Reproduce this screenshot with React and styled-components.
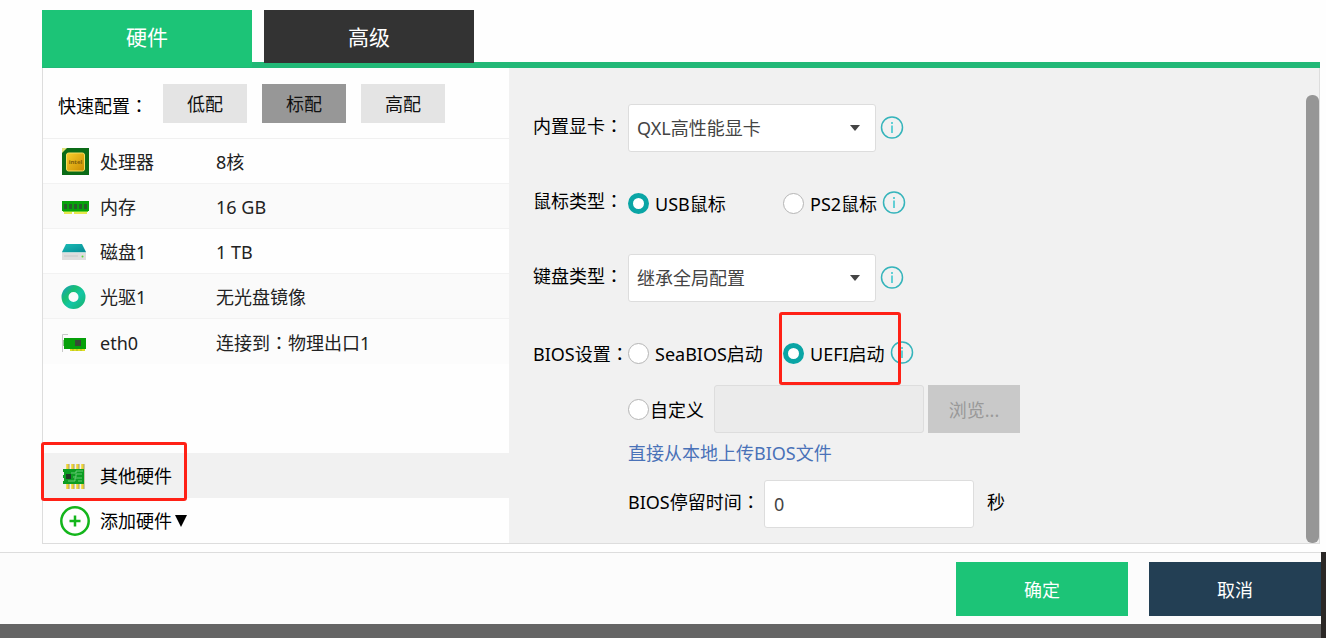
import { useState } from 'react'
import styled, { createGlobalStyle, css } from 'styled-components'

const GlobalStyle = createGlobalStyle`
    * {
        box-sizing: border-box;
    }
    body {
        margin: 0;
        background: #fefefe;
        color: #000;
    }
    body, button, input, select {
        font-family: 'Noto Sans', 'Noto Sans CJK SC', sans-serif;
        font-size: 18px;
        line-height: 24px;
    }
`

const Dialog = styled.div`
    padding-top: 10px;
`

const Main = styled.main`
    margin: 0 6px 8px 42px;
`

const Tabs = styled.div`
    display: flex;
    gap: 12px;
    border-bottom: 6px solid #22b877;
`

const Tab = styled.button`
    width: 210px;
    height: 52px;
    padding: 2px 0 0;
    border: 0;
    background: ${props => props.$active ? '#1cc477' : '#333'};
    box-shadow: ${props => props.$active ? '0 5px 0 #1cc477' : '0 1px 0 #333'};
    color: #fff;
    font-size: 21px;
    cursor: pointer;
`

const Panel = styled.div`
    display: flex;
    border: 1px solid #ddd;
    border-top: 0;
`

const Sidebar = styled.section`
    display: flex;
    flex: none;
    flex-direction: column;
    width: 466px;
`

const QuickConfig = styled.div`
    display: flex;
    align-items: center;
    height: 71px;
    padding-left: 15px;
    border-bottom: 1px solid #f0f0f0;
`

const QuickLabel = styled.span`
    width: 105px;
    padding-top: 4px;
`

const QuickButton = styled.button`
    width: 84px;
    height: 39px;
    margin-right: 15px;
    padding: 2px 0 0;
    border: 0;
    background: ${props => props.$active ? '#979797' : '#e4e4e4'};
    color: #111;
    cursor: pointer;
`

// full-width colon that sits in the middle of its cell
const ColonMark = styled.span`
    font-family: 'Noto Sans CJK TC', sans-serif;
`

const HardwareList = styled.ul`
    margin: 0 0 auto;
    padding: 0;
    list-style: none;
`

const rowStyle = css`
    display: flex;
    align-items: center;
    gap: 10px;
    width: 100%;
    height: 45px;
    padding: 0 0 0 17px;
    text-align: left;
`

const HardwareRow = styled.li`
    ${rowStyle}
    border-bottom: 1px solid #f2f2f2;
    color: #222;
    &:nth-child(even) {
        background: #fafafa;
    }
    &:last-child {
        border-bottom: 0;
        background: #fcfcfc;
    }
`

const HardwareName = styled.span`
    width: 106px;
    padding-top: 2px;
`

const HardwareValue = styled.span`
    padding-top: 2px;
`

const HardwareButton = styled.button`
    ${rowStyle}
    position: relative;
    border: 0;
    background: ${props => props.$active ? '#f1f1f1' : 'transparent'};
    color: #000;
    cursor: pointer;
`

const ButtonLabel = styled.span`
    display: flex;
    align-items: center;
    gap: 2px;
`

const Icon = styled.svg`
    flex: none;
    width: 30px;
    height: 30px;
`

const Settings = styled.section`
    display: flex;
    flex: 1;
    min-width: 0;
    background: #f1f1f1;
`

const Form = styled.form`
    display: flex;
    flex: 1;
    flex-direction: column;
    gap: 27px;
    padding: 36px 0 15px 24px;
`

const Scrollbar = styled.div`
    width: 13px;
    margin-top: 27px;
    border-radius: 6px;
    background: #969696;
`

const Field = styled.div`
    display: flex;
    align-items: center;
    height: 48px;
`

const FieldLabel = styled.label`
    flex: none;
    width: ${props => props.$wide ? '136px' : '95px'};
    padding-bottom: ${props => props.$flush ? '0' : '5px'};
    white-space: nowrap;
`

const BiosGroup = styled.div`
    display: flex;
    flex-direction: column;
    gap: 8px;
`

const BiosExtra = styled.div`
    display: flex;
    flex-direction: column;
    gap: 4px;
    padding-left: 95px;
`

const SelectBox = styled.div`
    display: grid;
    align-items: center;
    width: 248px;
    margin-right: 4px;
    > * {
        grid-area: 1 / 1;
    }
    > svg {
        justify-self: end;
        width: 12px;
        height: 7px;
        margin-right: 15px;
        pointer-events: none;
    }
`

const boxStyle = css`
    height: 48px;
    border: 1px solid #ddd;
    border-radius: 3px;
    background: #fff;
    color: #444;
    outline: none;
`

const Select = styled.select`
    ${boxStyle}
    width: 100%;
    padding: 0 30px 0 8px;
    appearance: none;
`

const TextInput = styled.input`
    ${boxStyle}
    width: 210px;
    padding: 0 9px;
    &:disabled {
        background: #ebebeb;
    }
`

const RadioLabel = styled.label`
    position: relative;
    display: flex;
    align-items: center;
    gap: ${props => props.$tight ? '1px' : '6px'};
    min-width: ${props => props.$first ? '155px' : '0'};
    margin-right: ${props => props.$first ? '0' : '5px'};
    padding-top: 1px;
    white-space: nowrap;
`

const Radio = styled.input`
    appearance: none;
    flex: none;
    width: 21px;
    height: 21px;
    margin: 0;
    border: 1px solid #b5b5b5;
    border-radius: 50%;
    background: #fff;
    &:checked {
        border: 5px solid #0aa5a5;
    }
`

const CustomField = styled(Field)`
    ${RadioLabel} {
        margin-right: 10px;
    }
`

const BrowseButton = styled.button`
    width: 92px;
    height: 48px;
    margin-left: 4px;
    padding: 2px 0 0;
    border: 0;
    background: #c9c9c9;
    color: #999;
`

const UploadLink = styled.a`
    align-self: flex-start;
    padding-bottom: 7px;
    color: #4a72b8;
    line-height: 32px;
    text-decoration: none;
`

const Unit = styled.span`
    padding: 0 0 5px 13px;
`

const Highlight = styled.span`
    position: absolute;
    z-index: 1;
    border: 3px solid #ff2116;
    border-radius: 3px;
    pointer-events: none;
`

const RowHighlight = styled(Highlight)`
    top: -11px;
    left: -2px;
    width: 146px;
    height: 59px;
`

const OptionHighlight = styled(Highlight)`
    inset: -29px -16px -19px -4px;
`

const Bottom = styled.div`
    display: flex;
`

const Footer = styled.footer`
    display: flex;
    flex: 1;
    justify-content: flex-end;
    gap: 21px;
    padding: 9px 0 8px;
    border-top: 1px solid #ddd;
    background: #fcfcfc;
`

const FooterButton = styled.button`
    width: 172px;
    height: 54px;
    padding: 2px 0 0;
    border: 0;
    background: ${props => props.$primary ? '#1cc477' : '#233f54'};
    color: #fff;
    cursor: pointer;
`

const Edge = styled.div`
    width: 5px;
    background: #2b2826;
`

const Backdrop = styled.div`
    flex: 1;
    height: 14px;
    background: #656565;
`

function CpuIcon() {
    return (
        <Icon viewBox='0 0 30 30'>
            <defs>
                <linearGradient id='gold' x1='0' y1='0' x2='1' y2='1'>
                    <stop offset='0' stopColor='#f8cf2c' />
                    <stop offset='1' stopColor='#c98a00' />
                </linearGradient>
            </defs>
            <rect x='2' y='2' width='27' height='27' fill='#0b6b17' />
            <path d='M2 2h5l-5 5z' fill='#dfe27a' />
            <rect x='6.500' y='7' width='18' height='18' rx='2' fill='url(#gold)' stroke='#f6de62' />
            <text x='15.500' y='18' textAnchor='middle' fontSize='6' fontWeight='700' fill='#80600b'>intel</text>
        </Icon>
    )
}

function MemoryIcon() {
    return (
        <Icon viewBox='0 0 30 30'>
            <path d='M2 10h27v10H2z' fill='#07a10b' />
            <path d='M4 13h3v5H4zM9 13h3v5H9zM14 13h3v5h-3zM19 13h3v5h-3zM24 13h3v5h-3z' fill='#275c2b' />
            <path d='M3 20h25v1H3z' fill='#68cf2b' />
            <path d='M4 21h8v2H4zM14 21h13v2H14z' fill='#e8e84e' />
        </Icon>
    )
}

function DiskIcon() {
    return (
        <Icon viewBox='0 0 30 30'>
            <defs>
                <linearGradient id='disk' x1='0' y1='0' x2='1' y2='1'>
                    <stop offset='0' stopColor='#1bbcb5' />
                    <stop offset='1' stopColor='#078c96' />
                </linearGradient>
            </defs>
            <path d='M6 8h16l4 8H2z' fill='url(#disk)' />
            <path d='M2 16h24v8H2z' fill='#dedede' />
            <path d='M2 16h24v1H2z' fill='#b6d9d9' />
            <path d='M4 20h14' stroke='#c8c8c8' />
            <circle cx='22.500' cy='20.500' r='1' fill='#57d83b' />
        </Icon>
    )
}

function DiscIcon() {
    return (
        <Icon viewBox='0 0 30 30'>
            <defs>
                <linearGradient id='disc' x1='0' y1='0' x2='1' y2='1'>
                    <stop offset='0' stopColor='#18a9a6' />
                    <stop offset='.3' stopColor='#18bf72' />
                    <stop offset='.6' stopColor='#13c6a6' />
                    <stop offset='1' stopColor='#18b87c' />
                </linearGradient>
            </defs>
            <circle cx='13.500' cy='16' r='8.500' fill='none' stroke='url(#disc)' strokeWidth='7' />
        </Icon>
    )
}

function NetworkIcon() {
    return (
        <Icon viewBox='0 0 30 30'>
            <path d='M8 7.500H2.500V25' fill='none' stroke='#c9c9c9' />
            <path d='M4 11h22v11H4z' fill='#06a00a' />
            <path d='M15 13h6v6h-6z' fill='#374a35' />
            <path d='M3 13h1v6H3z' fill='#8bc98d' />
            <path d='M10 22h15v2H10z' fill='#dede21' />
            <path d='M13 22v2M17 22v2M21 22v2' stroke='#a6b72b' />
        </Icon>
    )
}

function ChipIcon() {
    return (
        <Icon viewBox='0 0 30 30'>
            <path d='M7.500 3v25M12.500 3v25M17.500 3v25M22.500 3v25' stroke='#f0d52f' strokeWidth='2.500' />
            <path d='M9 3v25M14 3v25M19 3v25M24 3v25' stroke='#8f8650' strokeWidth='.8' />
            <path d='M3 8h21v15H3v-3h1v-3H3v-3h1v-3H3z' fill='#0c9d22' />
            <path d='M6 13h5v5H6z' fill='#213b26' />
            <path d='M11 12h5v-2h7M13 16h3v-3h6M8 20h7v-3h7M18 20h4' fill='none' stroke='#7ed58a' strokeWidth='.8' />
        </Icon>
    )
}

function AddIcon() {
    return (
        <Icon viewBox='0 0 30 30'>
            <circle cx='15' cy='15' r='13.700' fill='none' stroke='#13b51b' strokeWidth='2.500' />
            <path d='M15 9.500v11M9.500 15h11' stroke='#13b51b' strokeWidth='2.500' />
        </Icon>
    )
}

function InfoIcon() {
    return (
        <svg width='24' height='24' viewBox='0 0 24 24'>
            <circle cx='12' cy='11.500' r='10.500' fill='none' stroke='#35b4bb' strokeWidth='1.500' />
            <path d='M12 6v2M12 9.500V17' stroke='#35c4cc' strokeWidth='1.500' />
        </svg>
    )
}

function Colon() {
    return <ColonMark>：</ColonMark>
}

function SelectField({ id, label, options }) {
    return (
        <Field>
            <FieldLabel htmlFor={id}>{label}<Colon /></FieldLabel>
            <SelectBox>
                <Select id={id}>
                    {options.map(option => <option key={option}>{option}</option>)}
                </Select>
                <svg viewBox='0 0 12 7'><path d='M1 0h10L6 6z' fill='#444' /></svg>
            </SelectBox>
            <InfoIcon />
        </Field>
    )
}

const hardware = [
    { name: '处理器', value: '8核', icon: <CpuIcon /> },
    { name: '内存', value: '16 GB', icon: <MemoryIcon /> },
    { name: '磁盘1', value: '1 TB', icon: <DiskIcon /> },
    { name: '光驱1', value: '无光盘镜像', icon: <DiscIcon /> },
    { name: 'eth0', value: <>连接到<Colon />物理出口1</>, icon: <NetworkIcon /> },
]

function App() {
    const [tab, setTab] = useState('硬件')
    const [level, setLevel] = useState('标配')
    const [mouse, setMouse] = useState('usb')
    const [bios, setBios] = useState('uefi')
    const [delay, setDelay] = useState('0')

    return (
        <Dialog>
            <GlobalStyle />
            <Main>
                <Tabs>
                    {['硬件', '高级'].map(name => (
                        <Tab key={name} $active={tab === name} onClick={() => setTab(name)}>{name}</Tab>
                    ))}
                </Tabs>
                <Panel>
                    <Sidebar>
                        <QuickConfig>
                            <QuickLabel>快速配置<Colon /></QuickLabel>
                            {['低配', '标配', '高配'].map(name => (
                                <QuickButton key={name} $active={level === name} onClick={() => setLevel(name)}>{name}</QuickButton>
                            ))}
                        </QuickConfig>
                        <HardwareList>
                            {hardware.map(item => (
                                <HardwareRow key={item.name}>
                                    {item.icon}
                                    <HardwareName>{item.name}</HardwareName>
                                    <HardwareValue>{item.value}</HardwareValue>
                                </HardwareRow>
                            ))}
                        </HardwareList>
                        <HardwareButton $active>
                            <ChipIcon />
                            <ButtonLabel>其他硬件</ButtonLabel>
                            <RowHighlight />
                        </HardwareButton>
                        <HardwareButton>
                            <AddIcon />
                            <ButtonLabel>
                                添加硬件
                                <svg width='14' height='12' viewBox='0 0 14 12'><path d='M1 0h12L7 12z' /></svg>
                            </ButtonLabel>
                        </HardwareButton>
                    </Sidebar>
                    <Settings>
                        <Form onSubmit={e => e.preventDefault()}>
                            <SelectField id='video' label='内置显卡' options={['QXL高性能显卡']} />
                            <Field role='radiogroup' aria-labelledby='mouse-label'>
                                <FieldLabel as='span' id='mouse-label'>鼠标类型<Colon /></FieldLabel>
                                <RadioLabel $first>
                                    <Radio type='radio' name='mouse' checked={mouse === 'usb'} onChange={() => setMouse('usb')} />
                                    USB鼠标
                                </RadioLabel>
                                <RadioLabel>
                                    <Radio type='radio' name='mouse' checked={mouse === 'ps2'} onChange={() => setMouse('ps2')} />
                                    PS2鼠标
                                </RadioLabel>
                                <InfoIcon />
                            </Field>
                            <SelectField id='keyboard' label='键盘类型' options={['继承全局配置']} />
                            <BiosGroup role='radiogroup' aria-labelledby='bios-label'>
                                <Field>
                                    <FieldLabel as='span' id='bios-label' $flush>BIOS设置<Colon /></FieldLabel>
                                    <RadioLabel $first>
                                        <Radio type='radio' name='bios' checked={bios === 'seabios'} onChange={() => setBios('seabios')} />
                                        SeaBIOS启动
                                    </RadioLabel>
                                    <RadioLabel>
                                        <Radio type='radio' name='bios' checked={bios === 'uefi'} onChange={() => setBios('uefi')} />
                                        UEFI启动
                                        <OptionHighlight />
                                    </RadioLabel>
                                    <InfoIcon />
                                </Field>
                                <BiosExtra>
                                    <CustomField>
                                        <RadioLabel $tight>
                                            <Radio type='radio' name='bios' checked={bios === 'custom'} onChange={() => setBios('custom')} />
                                            自定义
                                        </RadioLabel>
                                        <TextInput aria-label='自定义' disabled={bios !== 'custom'} />
                                        <BrowseButton type='button' disabled={bios !== 'custom'}>浏览...</BrowseButton>
                                    </CustomField>
                                    <UploadLink href='#upload'>直接从本地上传BIOS文件</UploadLink>
                                    <Field>
                                        <FieldLabel htmlFor='delay' $wide>BIOS停留时间<Colon /></FieldLabel>
                                        <TextInput id='delay' value={delay} onChange={e => setDelay(e.target.value)} />
                                        <Unit>秒</Unit>
                                    </Field>
                                </BiosExtra>
                            </BiosGroup>
                        </Form>
                        <Scrollbar />
                    </Settings>
                </Panel>
            </Main>
            <Bottom>
                <Footer>
                    <FooterButton $primary>确定</FooterButton>
                    <FooterButton>取消</FooterButton>
                </Footer>
                <Edge />
            </Bottom>
            <Bottom>
                <Backdrop />
                <Edge />
            </Bottom>
        </Dialog>
    )
}

export default App
